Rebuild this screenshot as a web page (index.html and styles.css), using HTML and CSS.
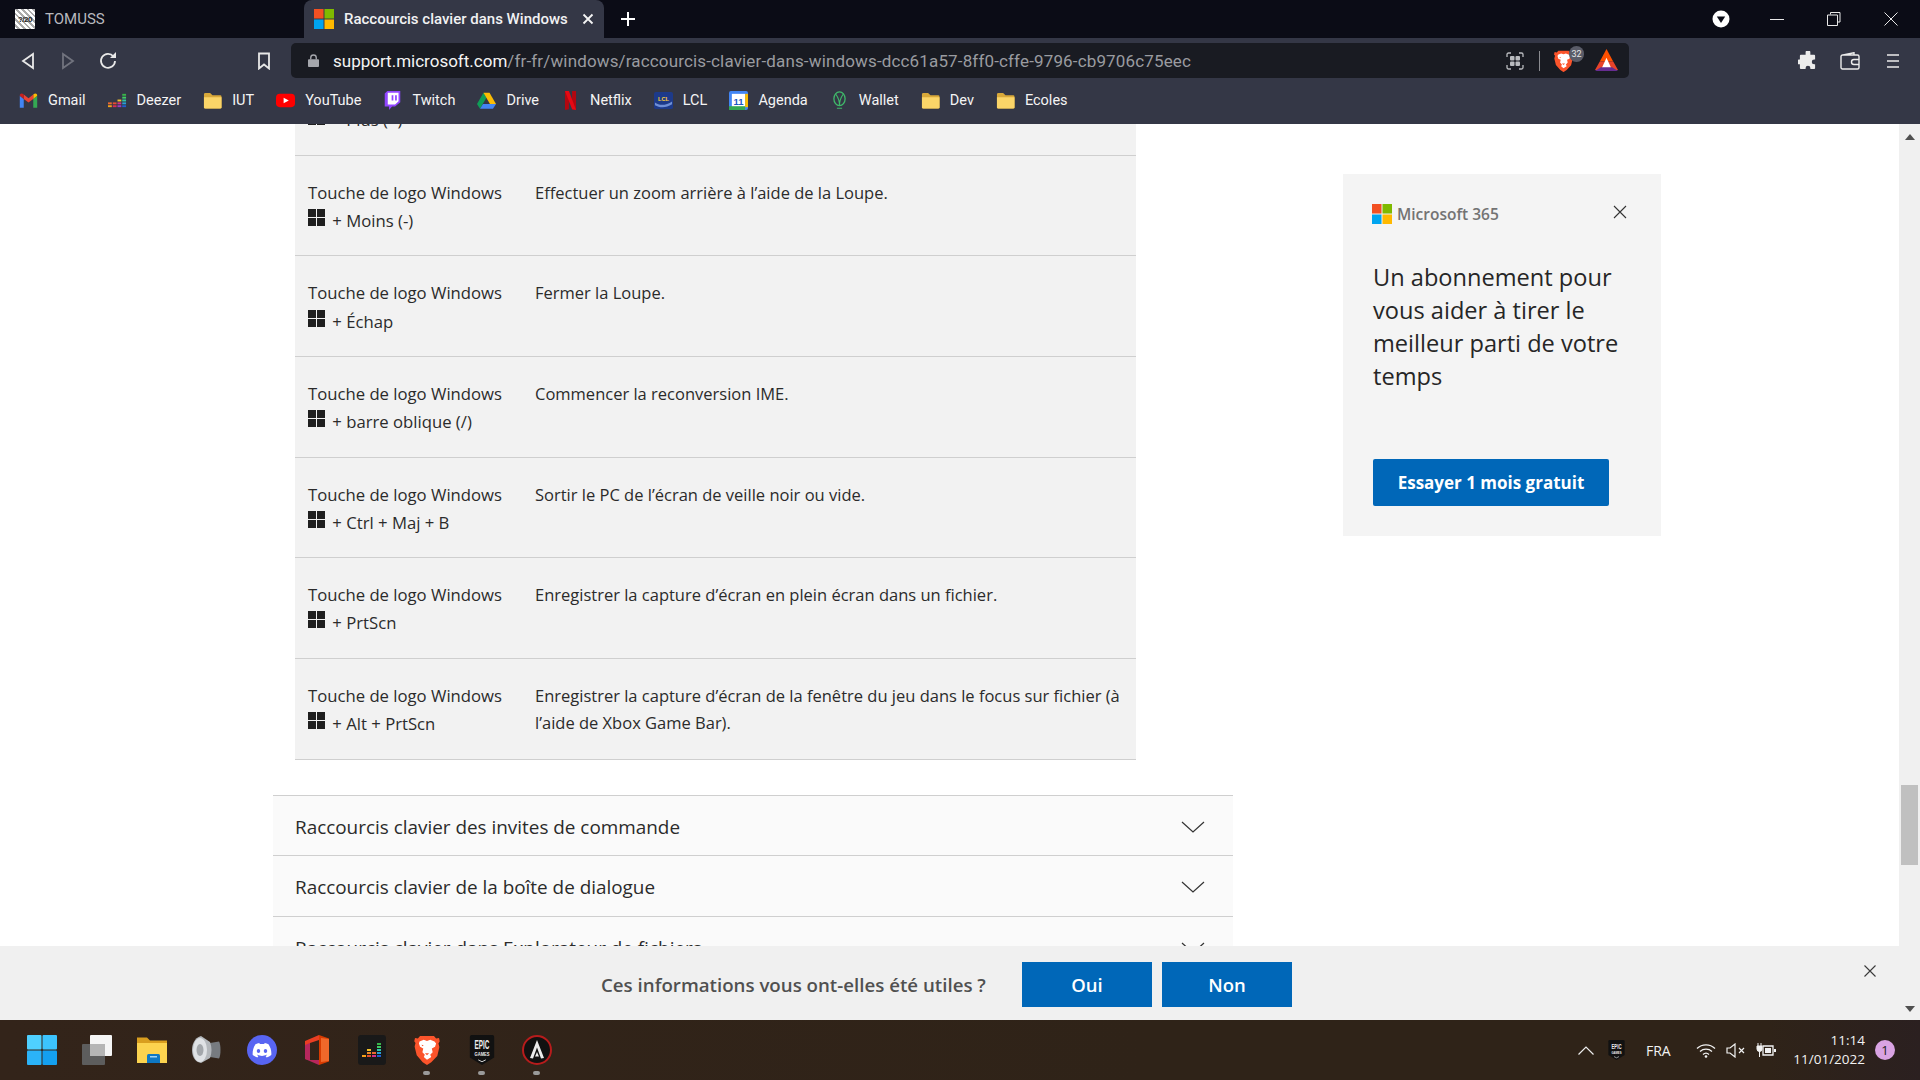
FILE: index.html
```html
<!DOCTYPE html>
<html lang="fr">
<head>
<meta charset="utf-8">
<title>Raccourcis clavier dans Windows</title>
<link rel="stylesheet" href="styles.css">
</head>
<body>
<svg class="defs" width="0" height="0">
  <symbol id="ms" viewBox="0 0 21 21"><rect width="10" height="10" fill="#f25022"/><rect x="11" width="10" height="10" fill="#7fba00"/><rect y="11" width="10" height="10" fill="#00a4ef"/><rect x="11" y="11" width="10" height="10" fill="#ffb900"/></symbol>
  <symbol id="win" viewBox="0 0 17 17"><rect width="8" height="8" fill="#1f1f1f"/><rect x="9" width="8" height="8" fill="#1f1f1f"/><rect y="9" width="8" height="8" fill="#1f1f1f"/><rect x="9" y="9" width="8" height="8" fill="#1f1f1f"/></symbol>
  <symbol id="folder" viewBox="0 0 20 18"><path fill="#d9a93a" d="M1 2.5A1.5 1.5 0 0 1 2.500 1h5L10 3.500h8A1.500 1.500 0 0 1 19.500 5v11a1.500 1.500 0 0 1-1.500 1.500H2.500A1.500 1.500 0 0 1 1 16z"/><path fill="#fbd568" d="M1 5.500h18.500V16a1.500 1.500 0 0 1-1.500 1.500H2.500A1.500 1.500 0 0 1 1 16z"/></symbol>
  <symbol id="brave" viewBox="0 0 24 28"><path fill="#fb542b" d="M5.500 1h13l2 2.300 2.700-.6 .8 3.200-1.300 2.100.9 3.300-2 8.200L16 25.500 12 28l-4-2.500-5.600-6.500-2-8.200.9-3.300L0 5.900l.8-3.200 2.700.6z"/><path fill="#fff" d="M5 6l4-1.500 3 1 3-1L19 6l1.500 2-1 3-3 1.500.8 3.500-2.300 2.500 1 2L12 23l-3-2.500 1-2L7.700 16l.8-3.500-3-1.500-1-3zM9 9.500l-2-.5.500 1.500zm6 0l2-.5-.5 1.500z"/><path fill="#fb542b" d="M10 17h4l-2 2z"/></symbol>
</svg>

<header class="chrome">
  <div class="titlebar">
    <div class="tab-off">
      <span class="fav-tomuss"><span class="fav-num">?/20</span></span>
      <span class="tab-off-title">TOMUSS</span>
    </div>
    <div class="tab-on">
      <svg class="ico-20" viewBox="0 0 21 21"><use href="#ms"/></svg>
      <span class="tab-on-title">Raccourcis clavier dans Windows</span>
      <svg class="tab-close" viewBox="0 0 12 12"><path d="M1.500 1.500l9 9m0-9l-9 9" stroke="#f4f4f4" stroke-width="1.800"/></svg>
    </div>
    <svg class="tab-new" viewBox="0 0 16 16"><path d="M8 1v14M1 8h14" stroke="#fff" stroke-width="2"/></svg>
    <div class="caption">
      <svg class="cap-drop" viewBox="0 0 18 18"><circle cx="9" cy="9" r="8.500" fill="#fff"/><path d="M4.800 6.500h8.400L9 13z" fill="#0b0c16"/></svg>
      <svg class="cap-btn" viewBox="0 0 14 14"><path d="M0 7.500h14" stroke="#e8e8e8"/></svg>
      <svg class="cap-btn" viewBox="0 0 14 14"><path d="M3.500 2.500V.5h9.500v9.500h-2M.5 3h10v10.500H.5z" stroke="#e8e8e8" fill="none"/></svg>
      <svg class="cap-btn" viewBox="0 0 14 14"><path d="M.5.5l13 13m0-13l-13 13" stroke="#e8e8e8"/></svg>
    </div>
  </div>

  <div class="toolbar">
    <svg class="nav-ico" viewBox="0 0 14 18"><path d="M12 2v14L2 9z" fill="none" stroke="#e8e8e8" stroke-width="1.800"/></svg>
    <svg class="nav-ico nav-dim" viewBox="0 0 14 18"><path d="M2 2v14l10-7z" fill="none" stroke="#71737e" stroke-width="1.800"/></svg>
    <svg class="nav-reload" viewBox="0 0 18 18"><path d="M14.500 4.500A7 7 0 1 0 16 9" fill="none" stroke="#e8e8e8" stroke-width="1.800"/><path d="M11 6h6V0z" fill="#e8e8e8"/></svg>
    <svg class="nav-mark" viewBox="0 0 14 18"><path d="M2 1.500h10v15l-5-4-5 4z" fill="none" stroke="#e8e8e8" stroke-width="1.800"/></svg>
    <div class="urlbar">
      <svg class="lock" viewBox="0 0 12 14"><path d="M3 6V4a3 3 0 0 1 6 0v2" fill="none" stroke="#a5a7ad" stroke-width="1.500"/><rect y="5.500" width="12" height="8.500" rx="1" fill="#a5a7ad"/></svg>
      <span class="url"><span class="url-host">support.microsoft.com</span><span class="url-path">/fr-fr/windows/raccourcis-clavier-dans-windows-dcc61a57-8ff0-cffe-9796-cb9706c75eec</span></span>
      <svg class="qr" viewBox="0 0 18 18"><path d="M1 5V2.500A1.500 1.500 0 0 1 2.500 1H5m8 0h2.500A1.500 1.500 0 0 1 17 2.500V5m0 8v2.500a1.500 1.500 0 0 1-1.500 1.500H13m-8 0H2.500A1.500 1.500 0 0 1 1 15.500V13" fill="none" stroke="#b9bbbf" stroke-width="1.300"/><rect x="4" y="4" width="4.500" height="4.500" rx="1" fill="#b9bbbf"/><rect x="9.500" y="4" width="4.500" height="4.500" rx="1" fill="#b9bbbf"/><rect x="4" y="9.500" width="4.500" height="4.500" rx="1" fill="#b9bbbf"/><rect x="9.500" y="9.500" width="4.500" height="4.500" rx="1" fill="#b9bbbf"/></svg>
      <span class="url-sep"></span>
      <span class="brave-wrap">
        <svg class="brave-url" viewBox="0 0 24 28"><use href="#brave"/></svg>
        <span class="brave-badge">32</span>
      </span>
      <svg class="bat" viewBox="0 0 24 24"><path fill="#ff5000" d="M12 0l7 13H5z"/><path fill="#e8432a" d="M5 13h14l5 9H0z"/><path fill="#fff" d="M12 9l5 11H7z"/><path fill="#662d91" d="M0 23h24l-6-4H6z"/></svg>
    </div>
    <svg class="puzzle" viewBox="0 0 20 20"><path fill="#ececec" d="M8 1.500a2.500 2.500 0 0 1 5 0V4h4a1 1 0 0 1 1 1v4h-1a2.500 2.500 0 0 0 0 5h1v4a1 1 0 0 1-1 1h-4v-1a2.500 2.500 0 0 0-5 0v1H3a1 1 0 0 1-1-1v-4H1a2.500 2.500 0 0 1 0-5h1V5a1 1 0 0 1 1-1h5z"/></svg>
    <svg class="wallet" viewBox="0 0 20 18"><path d="M3 3l11-2.300V3M1 4.500A1.500 1.500 0 0 1 2.500 3h15A1.500 1.500 0 0 1 19 4.500v11a1.500 1.500 0 0 1-1.500 1.500h-15A1.500 1.500 0 0 1 1 15.500zM19 7.500h-5a2.500 2.500 0 0 0 0 5h5" fill="none" stroke="#ececec" stroke-width="1.400"/></svg>
    <svg class="burger" viewBox="0 0 12 14"><path d="M0 1h12M0 7h12M0 13h12" stroke="#ececec" stroke-width="1.600"/></svg>
  </div>

  <nav class="bookmarks">
    <a class="bm"><svg class="bm-ico" viewBox="0 0 24 24"><path fill="#4285f4" d="M1 21h5V10L1 6z"/><path fill="#34a853" d="M18 21h5V6l-5 4z"/><path fill="#fbbc04" d="M18 4.500V10l5-4c0-3-2.500-4-5-1.500z"/><path fill="#ea4335" d="M6 10V4.500l6 4.500 6-4.500V10l-6 4.500z"/><path fill="#c5221f" d="M1 6l5 4V4.500C3.500 2 1 3 1 6z"/></svg><span>Gmail</span></a>
    <a class="bm"><svg class="bm-ico" viewBox="0 0 20 20"><rect x="0" y="15" width="4" height="2" fill="#f7a11a"/><rect x="0" y="12" width="4" height="2" fill="#ed6a2d"/><rect x="5" y="15" width="4" height="2" fill="#d92d55"/><rect x="5" y="12" width="4" height="2" fill="#e74e2e"/><rect x="10" y="15" width="4" height="2" fill="#9c3fc0"/><rect x="10" y="12" width="4" height="2" fill="#d32e8a"/><rect x="10" y="9" width="4" height="2" fill="#f3c22c"/><rect x="15" y="15" width="4" height="2" fill="#1f5fd1"/><rect x="15" y="12" width="4" height="2" fill="#2a9fd6"/><rect x="15" y="9" width="4" height="2" fill="#31c6a8"/><rect x="15" y="6" width="4" height="2" fill="#3ecf63"/><rect x="15" y="3" width="4" height="2" fill="#39b54a"/></svg><span>Deezer</span></a>
    <a class="bm"><svg class="bm-ico" viewBox="0 0 20 18"><use href="#folder"/></svg><span>IUT</span></a>
    <a class="bm"><svg class="bm-ico" viewBox="0 0 20 20"><rect y="3" width="20" height="14" rx="4" fill="#f00"/><path d="M8 7l5.500 3L8 13z" fill="#fff"/></svg><span>YouTube</span></a>
    <a class="bm"><svg class="bm-ico" viewBox="0 0 20 22"><path fill="#9146ff" d="M1 3l3-3h15v13l-6 5H9.500L6 22v-4H1z"/><path fill="#fff" d="M4.500 2H17v10l-4 3.500H4.500z"/><path fill="#9146ff" d="M9 5h2v6H9zM13 5h2v6h-2z"/></svg><span>Twitch</span></a>
    <a class="bm"><svg class="bm-ico" viewBox="0 0 22 20"><path fill="#0f9d58" d="M7.500 1L0 14l3.500 5.500L11 6.500z"/><path fill="#fbbc04" d="M7.500 1h7L22 14h-7z"/><path fill="#4285f4" d="M3.500 19.500L7 14h15l-3.500 5.500z"/></svg><span>Drive</span></a>
    <a class="bm"><svg class="bm-ico" viewBox="0 0 16 24"><path fill="#b20710" d="M1 0h5v23l-5 1zM10 0h5v24l-5-1z"/><path fill="#e50914" d="M1 0h5l9 24-5-1z"/></svg><span>Netflix</span></a>
    <a class="bm"><svg class="bm-ico" viewBox="0 0 20 18"><rect width="20" height="18" rx="2" fill="#1d3a8a"/><text class="lcl" x="10" y="9.500" text-anchor="middle">LCL</text><path d="M1 11c5 4 12 3 18-1v3c-6 4-13 4-18 1z" fill="#6f8fd6"/></svg><span>LCL</span></a>
    <a class="bm"><svg class="bm-ico" viewBox="0 0 20 20"><rect width="20" height="20" rx="2" fill="#4285f4"/><rect x="3" y="3" width="14" height="14" fill="#fff"/><rect x="17" y="3" width="3" height="14" fill="#fbbc04"/><rect y="16" width="17" height="4" fill="#34a853"/><text class="cal" x="10" y="14.500" text-anchor="middle">11</text></svg><span>Agenda</span></a>
    <a class="bm"><svg class="bm-ico" viewBox="0 0 16 22"><ellipse cx="8" cy="9" rx="6.500" ry="8" fill="none" stroke="#3fb96a" stroke-width="1.500"/><path d="M3.500 3.500C6 7 8 9 8 17M12.500 3.500C10 7 8 9 8 17M5 20h6" fill="none" stroke="#3fb96a" stroke-width="1.300"/></svg><span>Wallet</span></a>
    <a class="bm"><svg class="bm-ico" viewBox="0 0 20 18"><use href="#folder"/></svg><span>Dev</span></a>
    <a class="bm"><svg class="bm-ico" viewBox="0 0 20 18"><use href="#folder"/></svg><span>Ecoles</span></a>
  </nav>
</header>

<main class="viewport">
  <div class="page">
    <article class="article">
      <div class="table">
        <div class="row"><div class="keys"><br><svg class="win"><use href="#win"/></svg> + Plus (+)</div></div>
        <div class="row"><div class="keys">Touche de logo Windows<br><svg class="win"><use href="#win"/></svg> + Moins (-)</div><div class="desc">Effectuer un zoom arrière à l’aide de la Loupe.</div></div>
        <div class="row"><div class="keys">Touche de logo Windows<br><svg class="win"><use href="#win"/></svg> + Échap</div><div class="desc">Fermer la Loupe.</div></div>
        <div class="row"><div class="keys">Touche de logo Windows<br><svg class="win"><use href="#win"/></svg> + barre oblique (/)</div><div class="desc">Commencer la reconversion IME.</div></div>
        <div class="row"><div class="keys">Touche de logo Windows<br><svg class="win"><use href="#win"/></svg> + Ctrl + Maj + B</div><div class="desc">Sortir le PC de l’écran de veille noir ou vide.</div></div>
        <div class="row"><div class="keys">Touche de logo Windows<br><svg class="win"><use href="#win"/></svg> + PrtScn</div><div class="desc">Enregistrer la capture d’écran en plein écran dans un fichier.</div></div>
        <div class="row"><div class="keys">Touche de logo Windows<br><svg class="win"><use href="#win"/></svg> + Alt + PrtScn</div><div class="desc">Enregistrer la capture d’écran de la fenêtre du jeu dans le focus sur fichier (à l’aide de Xbox Game Bar).</div></div>
      </div>
      <div class="accordion">
        <div class="acc-row"><span>Raccourcis clavier des invites de commande</span><svg class="chev" viewBox="0 0 24 12"><path d="M1 1l11 10L23 1" fill="none" stroke="#333" stroke-width="1.200"/></svg></div>
        <div class="acc-row"><span>Raccourcis clavier de la boîte de dialogue</span><svg class="chev" viewBox="0 0 24 12"><path d="M1 1l11 10L23 1" fill="none" stroke="#333" stroke-width="1.200"/></svg></div>
        <div class="acc-row"><span>Raccourcis clavier dans Explorateur de fichiers</span><svg class="chev" viewBox="0 0 24 12"><path d="M1 1l11 10L23 1" fill="none" stroke="#333" stroke-width="1.200"/></svg></div>
      </div>
    </article>
    <aside class="promo">
      <div class="promo-head">
        <svg class="promo-logo"><use href="#ms"/></svg>
        <span class="promo-brand">Microsoft 365</span>
        <svg class="promo-close" viewBox="0 0 14 14"><path d="M1 1l12 12m0-12L1 13" stroke="#333" stroke-width="1.100"/></svg>
      </div>
      <h2 class="promo-title">Un abonnement pour vous aider à tirer le meilleur parti de votre temps</h2>
      <a class="promo-btn">Essayer 1 mois gratuit</a>
    </aside>
  </div>
  <div class="scrollbar">
    <svg class="arrow" viewBox="0 0 10 6"><path d="M0 6h10L5 0z" fill="#505050"/></svg>
    <div class="thumb"></div>
    <svg class="arrow arrow-down" viewBox="0 0 10 6"><path d="M0 0h10L5 6z" fill="#505050"/></svg>
  </div>
  <div class="feedback">
    <span class="fb-q">Ces informations vous ont-elles été utiles ?</span>
    <a class="fb-btn fb-oui">Oui</a>
    <a class="fb-btn">Non</a>
    <svg class="fb-close" viewBox="0 0 12 12"><path d="M.5.5l11 11m0-11l-11 11" stroke="#3a3a3a" stroke-width="1.100"/></svg>
  </div>
</main>

<footer class="taskbar">
  <div class="apps">
    <div class="app"><svg class="app-ico" viewBox="0 0 30 30"><rect width="14.500" height="14.500" rx="1" fill="#4fd0ff"/><rect x="15.500" width="14.500" height="14.500" rx="1" fill="#3cc4ff"/><rect y="15.500" width="14.500" height="14.500" rx="1" fill="#2bb3f8"/><rect x="15.500" y="15.500" width="14.500" height="14.500" rx="1" fill="#14a0f0"/></svg></div>
    <div class="app"><svg class="app-ico" viewBox="0 0 30 30"><rect y="9" width="23" height="21" rx="1" fill="#5d5d5d"/><rect x="8" width="22" height="21" rx="1" fill="#f5f5f5"/><rect x="8" y="9" width="15" height="12" fill="#b5b5b5"/></svg></div>
    <div class="app"><svg class="app-ico" viewBox="0 0 30 30"><path fill="#d99e1f" d="M0 2.500h10l3 3h17v5H0z"/><path fill="#fcd34f" d="M0 8h30v20H0z"/><path fill="#0e78c4" d="M10 20.500a1.500 1.500 0 0 1 1.500-1.500h10a1.500 1.500 0 0 1 1.500 1.500V28H10z"/><rect x="13" y="21" width="7" height="1.500" fill="#9fd4f5"/></svg></div>
    <div class="app"><svg class="app-ico" viewBox="0 0 30 30"><path d="M18 8l9-1.500c2 3 2 14 0 17L18 22z" fill="#777b80"/><path d="M18 7c2 5 2 11 0 16L9 28C2 27 0 20 0 15S2 3 9 1z" fill="#b4b8bc"/><ellipse cx="8" cy="15" rx="7" ry="12" fill="#dfe2e5"/><ellipse cx="8" cy="15" rx="3.500" ry="6" fill="#a3a7ab"/></svg></div>
    <div class="app"><svg class="app-ico" viewBox="0 0 30 30"><circle cx="15" cy="15" r="15" fill="#5865f2"/><path fill="#fff" d="M21.500 9.300a15 15 0 0 0-3.800-1.200l-.5 1a14 14 0 0 0-4.400 0l-.5-1a15 15 0 0 0-3.800 1.200C6 13 5.400 16.600 5.700 20.100a15 15 0 0 0 4.700 2.400l1-1.600-1.500-.8.400-.3a11 11 0 0 0 9.400 0l.4.300-1.500.8 1 1.600a15 15 0 0 0 4.700-2.400c.4-4-.7-7.600-2.800-10.800zM11.500 18c-.9 0-1.700-.9-1.700-2s.7-2 1.700-2 1.700.9 1.700 2-.8 2-1.700 2zm7 0c-.9 0-1.700-.9-1.700-2s.7-2 1.700-2 1.700.9 1.700 2-.8 2-1.700 2z"/></svg></div>
    <div class="app"><svg class="app-ico" viewBox="0 0 24 30"><path fill="#d83b01" d="M14 0l10 3.500v23L14 30z"/><path fill="#ea3e23" d="M14 0L0 6v18l5 1V8l9-3z"/><path fill="#b7275c" d="M0 24l14 6v-5H5V8L0 10z"/><path fill="#f0682a" d="M16 3l8 1v22l-8 1z"/></svg></div>
    <div class="app"><svg class="app-ico" viewBox="0 0 28 30"><rect width="28" height="30" rx="3" fill="#191919"/><rect x="4" y="20" width="4" height="2" fill="#f7a11a"/><rect x="9" y="20" width="4" height="2" fill="#e74e2e"/><rect x="9" y="17" width="4" height="2" fill="#f08a24"/><rect x="9" y="14" width="4" height="2" fill="#f3c22c"/><rect x="14" y="20" width="4" height="2" fill="#d32e8a"/><rect x="14" y="17" width="4" height="2" fill="#ec6a2d"/><rect x="19" y="20" width="4" height="2" fill="#1f5fd1"/><rect x="19" y="17" width="4" height="2" fill="#2a9fd6"/><rect x="19" y="14" width="4" height="2" fill="#31c6a8"/><rect x="19" y="11" width="4" height="2" fill="#3ecf63"/><rect x="19" y="8" width="4" height="2" fill="#39b54a"/></svg></div>
    <div class="app app-open"><svg class="app-ico" viewBox="0 0 24 28"><use href="#brave"/></svg></div>
    <div class="app app-open"><svg class="app-ico" viewBox="0 0 26 32"><path fill="#111" d="M2 0h22a2 2 0 0 1 2 2v22l-13 8-13-8V2a2 2 0 0 1 2-2z"/><text class="epic-a" x="13" y="15" text-anchor="middle" textLength="16" lengthAdjust="spacingAndGlyphs">EPIC</text><text class="epic-b" x="13" y="22" text-anchor="middle" textLength="16" lengthAdjust="spacingAndGlyphs">GAMES</text><path stroke="#ddd" fill="none" d="M9 26.500l4 2 4-2"/></svg></div>
    <div class="app app-open"><svg class="app-ico" viewBox="0 0 30 30"><circle cx="15" cy="15" r="14" fill="#111" stroke="#b71c1c" stroke-width="2"/><path fill="#ececec" d="M15 5l7 18-3 .5L15 12.500 11 23.500 8 23z"/><path fill="#ececec" d="M15 17l2 4.500h-4z"/></svg></div>
  </div>
  <div class="tray">
    <svg class="tray-caret" viewBox="0 0 16 9"><path d="M.5 8.500L8 1l7.500 7.500" fill="none" stroke="#eee" stroke-width="1.200"/></svg>
    <svg class="tray-epic" viewBox="0 0 26 32"><path fill="#111" d="M2 0h22a2 2 0 0 1 2 2v22l-13 8-13-8V2a2 2 0 0 1 2-2z"/><text class="epic-a" x="13" y="15" text-anchor="middle" textLength="16" lengthAdjust="spacingAndGlyphs">EPIC</text><text class="epic-b" x="13" y="22" text-anchor="middle" textLength="16" lengthAdjust="spacingAndGlyphs">GAMES</text><path stroke="#ddd" fill="none" d="M9 26.500l4 2 4-2"/></svg>
    <span class="tray-lang">FRA</span>
    <svg class="tray-wifi" viewBox="0 0 20 15"><path d="M1 5.500a13 13 0 0 1 18 0M4 8.500a9 9 0 0 1 12 0M7 11.500a4.500 4.500 0 0 1 6 0" fill="none" stroke="#f2f2f2" stroke-width="1.300"/><circle cx="10" cy="13.500" r="1.300" fill="#f2f2f2"/></svg>
    <svg class="tray-vol" viewBox="0 0 20 15"><path d="M1 5h3l5-4v13l-5-4H1z" fill="none" stroke="#f2f2f2" stroke-width="1.200"/><path d="M13 5l5 5m0-5l-5 5" stroke="#f2f2f2" stroke-width="1.200"/></svg>
    <svg class="tray-bat" viewBox="0 0 20 15"><path d="M7 3h10v9H7z" fill="none" stroke="#f2f2f2" stroke-width="1.300"/><rect x="9" y="5" width="6" height="5" fill="#f2f2f2"/><rect x="18" y="6" width="2" height="3" fill="#f2f2f2"/><path d="M2 0v3M5 0v3M1 3h5v3a2.500 2.500 0 0 1-5 0zM3.500 8v6" fill="#f2f2f2" stroke="#f2f2f2"/></svg>
    <div class="clock"><span>11:14</span><span>11/01/2022</span></div>
    <span class="notif">1</span>
  </div>
</footer>
</body>
</html>
```

FILE: styles.css
```css
* { box-sizing: border-box; }
html, body { margin: 0; height: 100%; }
body {
  width: 1920px; height: 1080px; overflow: hidden;
  display: flex; flex-direction: column;
  font-family: "Open Sans", "Noto Sans", sans-serif; color: #262626; background: #fff;
}
.defs { position: absolute; }
a { display: block; }
svg { flex: none; display: block; }

/* browser chrome */
.chrome { flex: none; height: 124px; background: #343746; color: #fff; font-family: "Roboto", sans-serif; }
.titlebar { height: 38px; background: #0b0c16; display: flex; align-items: center; }
.tab-off { width: 304px; height: 38px; display: flex; align-items: center; padding-left: 15px; }
.fav-tomuss { width: 20px; height: 20px; background: repeating-linear-gradient(45deg, #fff 0 2px, #aaa 2px 4px); display: flex; align-items: center; justify-content: center; overflow: hidden; }
.fav-num { font: 700 8px "Liberation Sans", sans-serif; color: #222; letter-spacing: -.5px; white-space: nowrap; }
.tab-off-title { margin-left: 10px; font-size: 15px; color: #b8b9be; }
.tab-on { width: 300px; height: 38px; background: #343746; border-radius: 8px 8px 0 0; display: flex; align-items: center; padding-left: 10px; }
.ico-20 { width: 20px; height: 20px; }
.tab-on-title { margin-left: 10px; font-size: 15px; font-weight: 500; color: #f1f1f3; width: 229px; white-space: nowrap; }
.tab-close { width: 12px; height: 12px; margin-left: 9px; }
.tab-new { width: 16px; height: 16px; margin-left: 16px; }
.caption { margin-left: auto; display: flex; align-items: center; padding-right: 22px; }
.cap-drop { width: 18px; height: 18px; margin-right: 40px; }
.cap-btn { width: 14px; height: 14px; margin-left: 43px; }
.cap-drop + .cap-btn { margin-left: 0; }

.toolbar { height: 40px; padding-top: 5px; display: flex; align-items: center; }
.nav-ico { width: 14px; height: 18px; margin-left: 21px; }
.nav-dim { margin-left: 26px; }
.nav-reload { width: 18px; height: 18px; margin-left: 24px; }
.nav-mark { width: 14px; height: 18px; margin-left: 140px; }
.urlbar { width: 1338px; height: 35px; margin-left: 20px; background: #191b22; border-radius: 5px; display: flex; align-items: center; padding-left: 17px; }
.lock { width: 11px; height: 13px; }
.url { margin-left: 14px; width: 1166px; white-space: nowrap; font-size: 17px; color: #9a9ba0; }
.url-host { color: #f4f4f4; }
.url-path { letter-spacing: .15px; }
.qr { width: 18px; height: 18px; margin-left: 7px; }
.url-sep { width: 1px; height: 20px; background: #8a8b90; margin-left: 15px; }
.brave-wrap { display: flex; margin-left: 14px; position: relative; }
.brave-url { width: 19px; height: 24px; }
.brave-badge { position: absolute; left: 15px; top: -3px; width: 15px; height: 16px; border-radius: 8px; background: #5a5c68; color: #e6e6e6; font-size: 9px; display: flex; align-items: center; justify-content: center; }
.bat { width: 23px; height: 23px; margin-left: 22px; }
.puzzle { width: 19px; height: 19px; margin-left: 169px; }
.wallet { width: 20px; height: 18px; margin-left: 23px; }
.burger { width: 12px; height: 14px; margin-left: 27px; }

.bookmarks { height: 44px; display: flex; align-items: center; padding-left: 19px; gap: 22px; font-size: 14.500px; color: #f4f4f4; }
.bm { display: flex; align-items: center; gap: 10px; }
.bm-ico { width: 19px; height: 19px; }
.lcl { font: 700 6px "Liberation Sans", sans-serif; fill: #ffcf3a; }
.cal { font: 700 10px "Liberation Sans", sans-serif; fill: #1a56c4; }

/* page */
.viewport { flex: 1; min-height: 0; display: flex; position: relative; overflow: hidden; }
.page { flex: 1; min-width: 0; display: flex; align-items: flex-start; padding-left: 273px; background: #fff; }
.article { width: 960px; flex: none; margin-top: -69px; }
.table { margin-left: 22px; width: 841px; background: #f2f2f2; }
.row { height: 100.67px; display: flex; padding: 23px 12px 0 13px; border-bottom: 1px solid #cfcfcf; font-size: 16.700px; line-height: 28.200px; color: #2b2b2b; }
.keys { width: 227px; flex: none; }
.desc { flex: 1; font-size: 16.500px; line-height: 27px; }
.win { display: inline-block; width: 17px; height: 17px; vertical-align: 1px; margin-right: 3px; }

.accordion { margin-top: 35px; background: #fafafa; }
.acc-row { height: 60.500px; display: flex; align-items: center; justify-content: space-between; padding: 3px 28px 0 22px; border-top: 1px solid #cfcfcf; font-size: 18.900px; color: #2b2b2b; }
.chev { width: 24px; height: 12px; }

/* promo */
.promo { width: 318px; height: 362px; flex: none; margin: 50px 0 0 110px; background: #f4f4f4; padding: 30px 30px 0 29px; display: flex; flex-direction: column; }
.promo-head { display: flex; align-items: center; height: 20px; }
.promo-logo { width: 20px; height: 20px; }
.promo-brand { margin-left: 5px; font-size: 15.500px; font-weight: 600; color: #737373; }
.promo-close { width: 14px; height: 14px; margin-left: 114px; margin-top: -4px; }
.promo-title { margin: 37px 0 0 1px; font-size: 23.600px; font-weight: 400; line-height: 33px; color: #262626; }
.promo-btn { margin: 66px 0 0 1px; width: 236px; height: 47px; background: #0067b8; color: #fff; border-radius: 2px; font-size: 17px; font-weight: 700; display: flex; align-items: center; justify-content: center; }

/* scrollbar */
.scrollbar { width: 21px; flex: none; background: #f0f0f0; display: flex; flex-direction: column; align-items: center; padding-top: 10px; }
.arrow { width: 10px; height: 6px; }
.thumb { width: 17px; height: 80px; background: #c0c0c0; margin-top: 645px; }
.arrow-down { margin-top: auto; margin-bottom: 8px; }

/* feedback */
.feedback { position: absolute; left: 0; right: 21px; bottom: 0; height: 74px; background: #f0f0f0; display: flex; align-items: center; padding: 3px 0 0 601px; }
.fb-q { width: 421px; font-size: 18.700px; font-weight: 600; color: #505050; white-space: nowrap; }
.fb-btn { width: 130px; height: 45px; background: #0067b8; color: #fff; font-size: 18.500px; font-weight: 600; display: flex; align-items: center; justify-content: center; }
.fb-oui { margin-right: 10px; }
.fb-close { width: 12px; height: 12px; position: absolute; left: 1864px; top: 19px; }

/* taskbar */
.taskbar { flex: none; height: 60px; background: linear-gradient(90deg, #33241a 0%, #2f2318 60%, #2f2318 92%, #2b2020 100%); display: flex; align-items: stretch; justify-content: space-between; color: #f2f2f2; font-family: "Open Sans", sans-serif; }
.apps { display: flex; padding-left: 14px; }
.app { width: 55px; display: flex; align-items: center; justify-content: center; position: relative; }
.app-ico { width: 30px; height: 30px; }
.app-open::after { content: ""; position: absolute; bottom: 5px; left: 24px; width: 7px; height: 4px; border-radius: 2px; background: #9a9a9a; }
.tray { display: flex; align-items: center; padding-right: 25px; }
.tray-caret { width: 16px; height: 9px; }
.tray-epic { width: 17px; height: 20px; margin-left: 14px; }
.tray-lang { margin-left: 21px; width: 50px; font-size: 14px; }
.tray-wifi { width: 20px; height: 15px; }
.tray-vol { width: 20px; height: 15px; margin-left: 10px; }
.tray-bat { width: 20px; height: 15px; margin-left: 10px; }
.clock { width: 89px; display: flex; flex-direction: column; align-items: flex-end; font-size: 13.500px; line-height: 19px; }
.notif { width: 20px; height: 20px; margin-left: 10px; border-radius: 50%; background: #d9a3e3; color: #222; font-size: 13px; display: flex; align-items: center; justify-content: center; }

/* svg text */
.epic-a { font: 700 13px "Liberation Sans Narrow", "Liberation Sans", sans-serif; fill: #eee; }
.epic-b { font: 700 5px "Liberation Sans", sans-serif; fill: #eee; }
```
